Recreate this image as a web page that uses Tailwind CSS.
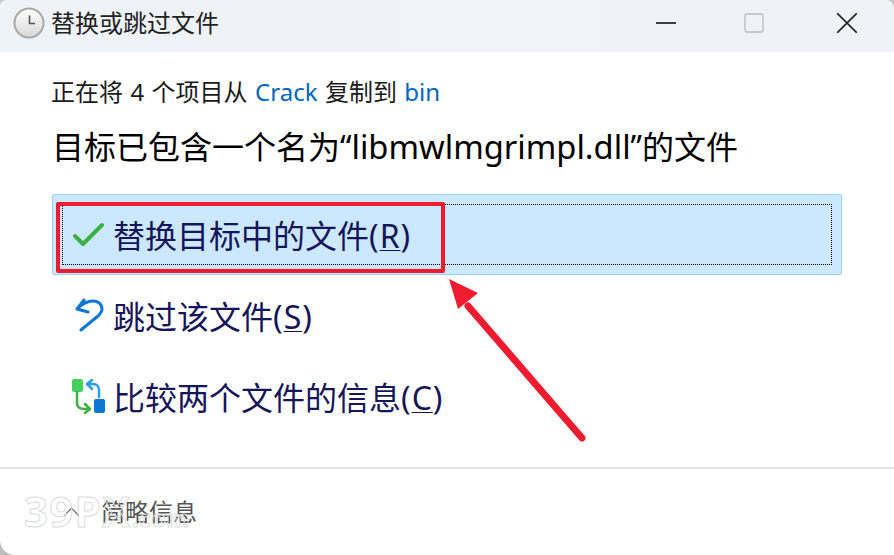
<!DOCTYPE html>
<html>
<head>
<meta charset="utf-8">
<title>替换或跳过文件</title>
<script src="https://cdn.jsdelivr.net/npm/@tailwindcss/browser@4"></script>
</head>
<body class="bg-white">
<div class="relative w-[894px] h-[555px] overflow-hidden bg-white text-black font-['Noto_Sans','Noto_Sans_CJK_SC',sans-serif]">

    <!-- TITLE BAR -->
    <div class="h-[52px] flex items-center justify-between bg-gradient-to-r from-[#eef3f8] to-[#f1f2f8]">
        <div class="flex items-center">
            <svg class="ml-[13px] mt-[-6px] w-[32px] h-[32px]" viewBox="0 0 32 32">
                <defs>
                    <linearGradient id="clockFace" x1="0" y1="0" x2="0" y2="1">
                        <stop offset="0" stop-color="#ffffff"/>
                        <stop offset="1" stop-color="#d8d8d8"/>
                    </linearGradient>
                </defs>
                <circle cx="16" cy="16" r="14.5" fill="url(#clockFace)" stroke="#a8a8a8" stroke-width="2"/>
                <path d="M16.5 8.5V16.5H22" fill="none" stroke="#555" stroke-width="1.6"/>
            </svg>
            <span class="ml-[6px] mt-[-7px] text-[24px] leading-[32px] text-[#222]">替换或跳过文件</span>
        </div>
        <div class="flex items-center mt-[-6px]">
            <svg class="w-[20px] h-[20px] mr-[68px]" viewBox="0 0 20 20"><path d="M0 10H20" stroke="#111" stroke-width="1.6"/></svg>
            <svg class="w-[20px] h-[20px] mr-[73px]" viewBox="0 0 20 20"><rect x="1" y="1" width="18" height="18" rx="2" fill="none" stroke="#c8c8cc" stroke-width="1.8"/></svg>
            <svg class="w-[20px] h-[20px] mr-[37px]" viewBox="0 0 20 20"><path d="M0 0L20 20M20 0L0 20" stroke="#222" stroke-width="1.6"/></svg>
        </div>
    </div>

    <!-- CONTENT -->
    <div class="px-[52px] pt-[22px]">
        <div class="ml-[-1px] text-[24px] leading-[36px] text-[#1a1a1a] [word-spacing:1.2px]">正在将 4 个项目从 <span class="text-[#0067c0]">Crack</span> 复制到 <span class="text-[#0067c0]">bin</span></div>
        <div class="mt-[15px] text-[32px] leading-[44px]">目标已包含一个名为“<span class="text-[32.7px]">libmwlmgrimpl.dll</span>”的文件</div>

        <!-- OPTIONS -->
        <div class="mt-[25px] w-[790px] text-[32px] leading-[44px] text-[#15155a]">
            <div class="h-[81px] p-[9px] rounded-[2px] border border-[#99d1ff] bg-[#cce8ff]">
                <div class="h-[61px] flex items-center border border-dotted border-black">
                    <svg class="ml-[10px] w-[32px] h-[32px]" viewBox="0 0 32 32"><path d="M2 17L10 25L29 6" fill="none" stroke="#3cb043" stroke-width="4" stroke-linecap="round" stroke-linejoin="round"/></svg>
                    <span class="ml-[8px] mt-[2px]">替换目标中的文件<span class="tracking-[1px]">(<span class="underline underline-offset-2 decoration-1">R</span>)</span></span>
                </div>
            </div>
            <div class="h-[81px] flex items-center pl-[20px]">
                <svg class="w-[32px] h-[36px]" viewBox="0 0 32 36"><path d="M5 11C10 6 15 3 21 3C26 3 30 6 30 11C30 14 28 16 26 18L9 32M12 2L5 11L16 14" fill="none" stroke="#0a78d4" stroke-width="3" stroke-linecap="round" stroke-linejoin="round"/></svg>
                <span class="ml-[9px] mt-[2px]">跳过该文件<span class="tracking-[1px]">(<span class="underline underline-offset-2 decoration-1">S</span>)</span></span>
            </div>
            <div class="h-[81px] flex items-center pl-[20px]">
                <svg class="w-[34px] h-[36px]" viewBox="0 0 34 36">
                    <rect x="0" y="0" width="11" height="13" rx="2" fill="#47d15c"/>
                    <rect x="22" y="20" width="11" height="14" rx="2" fill="#0a78d4"/>
                    <path d="M5 13V24C5 28 8 30 12 30H17M13 25L18 30L13 34" fill="none" stroke="#3cb043" stroke-width="2.5" stroke-linecap="round" stroke-linejoin="round"/>
                    <path d="M27 18V11C27 8 25 5 21 5H16M20 1L15 5L20 10" fill="none" stroke="#2a9de8" stroke-width="2.5" stroke-linecap="round" stroke-linejoin="round"/>
                </svg>
                <span class="ml-[7px] mt-[2px]">比较两个文件的信息<span class="tracking-[1px]">(<span class="underline underline-offset-2 decoration-1">C</span>)</span></span>
            </div>
        </div>
    </div>

    <!-- FOOTER -->
    <div class="absolute left-0 right-0 top-[467px] h-[88px] border-t-2 border-[#e2e2e2] flex items-center">
        <svg class="ml-[63px] w-[17px] h-[10px]" viewBox="0 0 17 10"><path d="M1 9L8.5 1L16 9" fill="none" stroke="#777" stroke-width="1.3"/></svg>
        <span class="ml-[21px] text-[24px] text-[#555]">简略信息</span>
    </div>

    <!-- WATERMARK -->
    <svg class="absolute left-[20px] top-[485px] w-[190px] h-[50px]" viewBox="0 0 190 50">
        <text x="4" y="42" font-family="Open Sans, sans-serif" font-weight="700" font-size="42" textLength="106" fill="none" stroke="#dcdcdc" stroke-width="1">39PX</text>
        <text x="112" y="42" font-family="Open Sans, sans-serif" font-weight="700" font-size="24" fill="none" stroke="#dcdcdc" stroke-width="1">.com</text>
    </svg>

    <!-- ANNOTATIONS -->
    <div class="absolute left-[56px] top-[202px] w-[389px] h-[71px] border-[4px] border-[#ee1c2e] rounded-[2px]"></div>
    <svg class="absolute inset-0 w-[894px] h-[555px]" viewBox="0 0 894 555">
        <path d="M582 438L468 306" stroke="#ee1c2e" stroke-width="7" stroke-linecap="round" fill="none"/>
        <polygon points="449,279 478,293 458,309" fill="#ee1c2e"/>
        <!-- window corners -->
        <path d="M0 541C1 549 6 554 14 555H0Z" fill="#bdbdbd"/>
        <path d="M0 6C0 3 2 1 5 0H0Z" fill="#c8c8c8"/>
        <path d="M888 0C891 1 893 3 894 7V0Z" fill="#c8c8c8"/>
    </svg>
</div>
</body>
</html>
